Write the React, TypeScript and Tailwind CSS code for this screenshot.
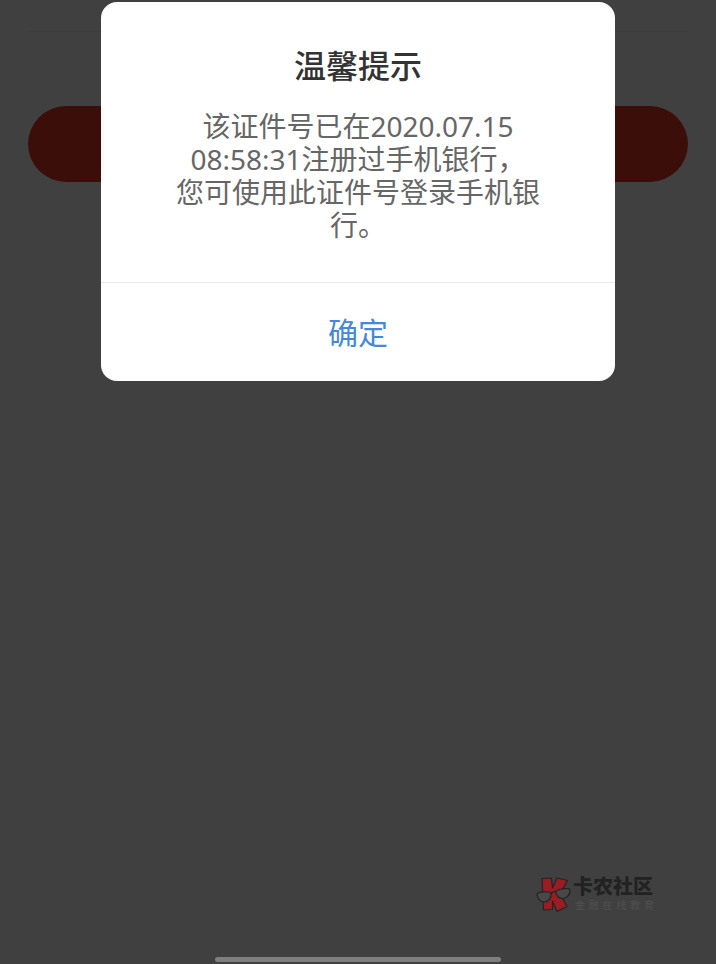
const TAGLINE = ['金', '融', '在', '线', '教', '育']

function LogoMark() {
  return (
    <svg width="36" height="38" viewBox="0 0 36 38" aria-hidden="true">
      <path
        d="M6 2.500 L15.500 2 L16.500 12 L21 2 L31.500 4.500 L24 18 L31 30.500 L21 35.500 L16.500 25 L16.500 33.500 L7.500 34 Z"
        fill="#9b1c22"
        stroke="#242424"
        strokeWidth="1.2"
        strokeLinejoin="round"
      />
      <g fill="#484848" stroke="#222222" strokeWidth="1.2">
        <path d="M1 18.500 C1 16.500 4 16 7.500 15.800 C11 15.600 14.500 15.500 15 17.500 C15.500 21.500 13 25.500 8.500 26 C4.500 26.300 1.500 22.500 1 18.500 Z" />
        <path d="M19.800 16 C19.800 14 22.500 13.500 26 13 C29.500 12.500 33 11.800 33.800 13.500 C34.500 17.500 32 21.700 27.500 22.500 C23.500 23 20.300 20 19.800 16 Z" />
        <path d="M15 17.500 Q17.400 15 19.800 16" fill="none" />
      </g>
    </svg>
  )
}

function Brand() {
  return (
    <div className="flex items-start">
      <LogoMark />
      <div className="w-[84px]">
        <p className="pl-px text-xl leading-[22px] font-black text-[#222222]">卡农社区</p>
        <p className="flex justify-between pr-0.5 pl-[3px] text-[10px] leading-[14px] text-[#505050]">
          {TAGLINE.map(c => (
            <span key={c}>{c}</span>
          ))}
        </p>
      </div>
    </div>
  )
}

function NoticeDialog() {
  return (
    <div
      role="alertdialog"
      aria-modal="true"
      aria-labelledby="notice-title"
      aria-describedby="notice-message"
      className="w-full overflow-hidden rounded-2xl bg-white text-center"
    >
      <div className="px-16 pt-11 pb-10">
        <h2 id="notice-title" className="text-[32px] leading-10 font-medium text-[#333333]">
          温馨提示
        </h2>
        <p id="notice-message" className="mt-6 text-[28px] leading-[33px] text-[#666666]">
          该证件号已在2020.07.15
          <br />
          08:58:31注册过手机银行，
          <br />
          您可使用此证件号登录手机银行。
        </p>
      </div>
      <button type="button" className="h-[99px] w-full border-t border-[#e8e8e8] text-[30px] text-[#4587d8]">
        确定
      </button>
    </div>
  )
}

export default function App() {
  return (
    <div
      lang="zh-CN"
      className="relative min-h-screen bg-white font-['Noto_Sans','Noto_Sans_CJK_SC',sans-serif]"
    >
      <main className="px-7 pt-[31px]">
        <hr className="border-[#f0f0f0]" />
        <button type="button" aria-label="下一步" className="mt-[74px] block h-19 w-full rounded-full bg-[#ec3828]" />
      </main>

      <div className="absolute inset-0 flex flex-col bg-black/75">
        <div className="px-[101px] pt-0.5">
          <NoticeDialog />
        </div>
        <div className="mt-auto flex justify-end pr-[60px] pb-[43px]">
          <Brand />
        </div>
        <div className="mx-auto mb-0.5 h-[5px] w-2/5 rounded-full bg-[#7f7f7f]" />
      </div>
    </div>
  )
}
